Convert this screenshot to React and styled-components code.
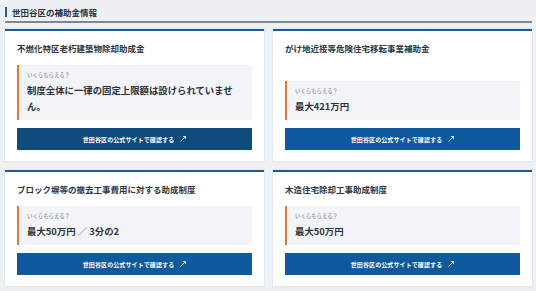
import React from "react";
import styled, { createGlobalStyle } from "styled-components";

const GlobalStyle = createGlobalStyle`
  html, body {
    margin: 0;
    padding: 0;
    background: #eef1f4;
  }
  body {
    font-family: "Noto Sans CJK JP", "Noto Sans", sans-serif;
    color: #2b323b;
  }
`;

const Page = styled.div`
  width: 536px;
  padding: 7px 4px 8px 5px;
  box-sizing: border-box;
`;

const Header = styled.div`
  display: flex;
  align-items: center;
  gap: 5px;
  height: 10px;
  padding-bottom: 4px;
  border-bottom: 2px solid #80868d;
`;

const HeaderBar = styled.span`
  width: 2px;
  height: 10px;
  background: #1f5c99;
`;

const HeaderTitle = styled.h2`
  margin: 0;
  font-size: 8.5px;
  line-height: 10px;
  font-weight: 700;
  color: #2b323b;
`;

const Grid = styled.div`
  display: grid;
  grid-template-columns: 1fr 1fr;
  gap: 9px;
  margin-top: 6px;
`;

const Card = styled.section`
  display: flex;
  flex-direction: column;
  background: #ffffff;
  border-top: 2px solid #1f5c94;
  box-shadow: 0 0 0 1px #e4e8ec, 0 1px 2px rgba(0, 0, 0, 0.05);
  padding: 9px 12px 11px;
`;

const CardTitle = styled.h3`
  margin: 0;
  font-size: 8.5px;
  line-height: 16px;
  font-weight: 700;
  color: #2f363f;
`;

const AmountBox = styled.div`
  margin-top: auto;
  background: #f2f4f7;
  border-left: 2px solid #e0783c;
  padding: 6px 12px 6px 8px;
`;

const Spacer = styled.div`
  height: 9px;
  flex-shrink: 0;
`;

const Label = styled.div`
  font-size: 5.4px;
  line-height: 8px;
  color: #6f757c;
`;

const Amount = styled.div`
  margin-top: 3px;
  font-size: 9.4px;
  line-height: 16px;
  font-weight: 700;
  color: #2b323b;
`;

const Slash = styled.span`
  font-weight: 400;
  color: #555b62;
`;

const LinkButton = styled.a`
  margin-top: 8px;
  height: 22px;
  display: flex;
  align-items: center;
  justify-content: center;
  gap: 6px;
  background: ${(p) => (p.$active ? "#104b7e" : "#0e5a9c")};
  color: #ffffff;
  font-size: 6px;
  font-weight: 700;
  letter-spacing: 0.1px;
  text-decoration: none;
`;

const Arrow = () => (
  <svg width="6" height="6" viewBox="0 0 6 6" fill="none" stroke="#ffffff" strokeWidth="0.8">
    <path d="M0.5 5.5 L5.5 0.5 M3 0.5 L5.5 0.5 L5.5 3" />
  </svg>
);

const items = [
  {
    title: "不燃化特区老朽建築物除却助成金",
    amount: "制度全体に一律の固定上限額は設けられていません。",
    active: true,
  },
  { title: "がけ地近接等危険住宅移転事業補助金", amount: "最大421万円" },
  {
    title: "ブロック塀等の撤去工事費用に対する助成制度",
    amount: (
      <>
        最大50万円 <Slash>／</Slash> 3分の2
      </>
    ),
  },
  { title: "木造住宅除却工事助成制度", amount: "最大50万円" },
];

export default function App() {
  return (
    <>
      <GlobalStyle />
      <Page>
        <Header>
          <HeaderBar />
          <HeaderTitle>世田谷区の補助金情報</HeaderTitle>
        </Header>
        <Grid>
          {items.map((it, i) => (
            <Card key={i}>
              <CardTitle>{it.title}</CardTitle>
              <Spacer />
              <AmountBox>
                <Label>いくらもらえる？</Label>
                <Amount>{it.amount}</Amount>
              </AmountBox>
              <LinkButton $active={it.active} href="#">
                世田谷区の公式サイトで確認する
                <Arrow />
              </LinkButton>
            </Card>
          ))}
        </Grid>
      </Page>
    </>
  );
}
